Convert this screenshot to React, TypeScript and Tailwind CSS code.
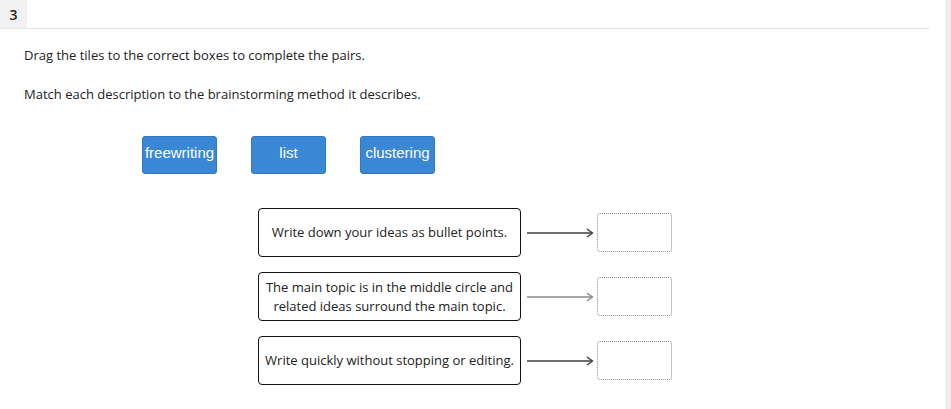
import React from 'react';

const TILES = ['freewriting', 'list', 'clustering'];

const PAIRS = [
  { text: 'Write down your ideas as bullet points.', arrow: '#3f3f3f' },
  { text: 'The main topic is in the middle circle and related ideas surround the main topic.', arrow: '#8a8a8a' },
  { text: 'Write quickly without stopping or editing.', arrow: '#3f3f3f' },
];

function Arrow({ color }: { color: string }) {
  return (
    <svg width="67" height="12" viewBox="0 0 67 12" className="shrink-0">
      <line x1="0" y1="6" x2="65" y2="6" stroke={color} strokeWidth="1.3" />
      <path d="M60 2 L65.5 6 L60 10" fill="none" stroke={color} strokeWidth="1.4" />
    </svg>
  );
}

export default function App() {
  return (
    <div className="w-[951px] h-[409px] bg-white relative overflow-hidden text-[#222]" style={{ fontFamily: '"Open Sans", sans-serif' }}>
      <div className="w-[930px] border-b border-[#e6e6e6]">
        <div className="w-[27px] h-[28px] bg-[#f2f2f2] flex items-center justify-center text-[14px] font-semibold text-[#222]">3</div>
      </div>
      <div className="absolute right-0 top-0 w-[6px] h-full bg-[#efefef]" />

      <div className="pl-[24px]">
        <p className="text-[13px] mt-[16px] leading-[20px]">Drag the tiles to the correct boxes to complete the pairs.</p>
        <p className="text-[13px] mt-[19px] leading-[20px]">Match each description to the brainstorming method it describes.</p>
      </div>

      <div className="flex gap-[34px] pl-[142px] mt-[32px]">
        {TILES.map((t) => (
          <div
            key={t}
            className="w-[75px] h-[38px] rounded-[3px] bg-[#3a87d6] border border-[#3478c0] text-white text-[15px] flex items-start justify-center pt-[5px]"
            style={{ fontFamily: '"Liberation Sans", Arial, sans-serif' }}
          >
            {t}
          </div>
        ))}
      </div>

      <div className="flex flex-col gap-[15px] pl-[258px] mt-[34px]">
        {PAIRS.map((p) => (
          <div key={p.text} className="flex items-center">
            <div className="w-[263px] h-[49px] border border-[#111] rounded-[4px] flex items-center justify-center text-center text-[13px] leading-[19px] px-[5px]">
              {p.text}
            </div>
            <div className="ml-[6px] mr-[3px]">
              <Arrow color={p.arrow} />
            </div>
            <div className="w-[75px] h-[39px] rounded-[3px] border border-dotted border-[#8a8a8a]" />
          </div>
        ))}
      </div>
    </div>
  );
}
